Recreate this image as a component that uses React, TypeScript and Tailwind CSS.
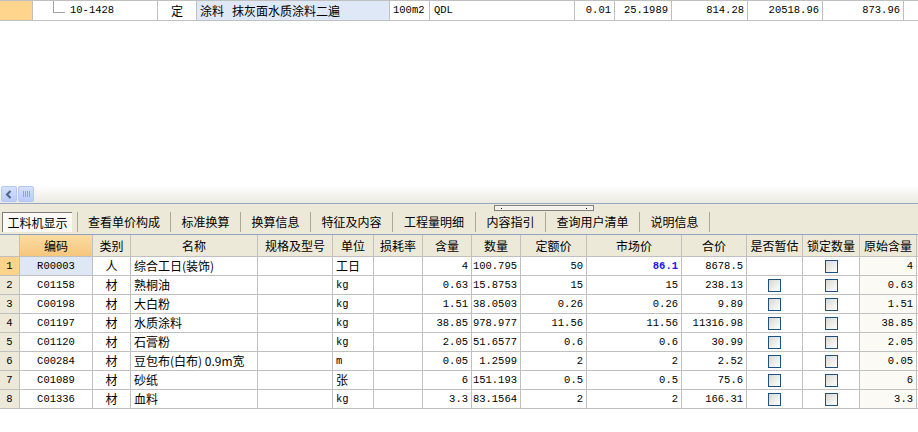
import React from 'react'

const cols = [20, 73, 38, 127, 75, 41, 49, 49, 49, 66, 95, 65, 56, 57, 57]
const headers = ['', '编码', '类别', '名称', '规格及型号', '单位', '损耗率', '含量', '数量', '定额价', '市场价', '合价', '是否暂估', '锁定数量', '原始含量']

type Row = {
  code: string
  kind: string
  name: string
  unit: string
  qty: string
  amount: string
  base: string
  market: string
  total: string
  est: boolean
}

const rows: Row[] = [
  { code: 'R00003', kind: '人', name: '综合工日(装饰)', unit: '工日', qty: '4', amount: '100.795', base: '50', market: '86.1', total: '8678.5', est: false },
  { code: 'C01158', kind: '材', name: '熟桐油', unit: 'kg', qty: '0.63', amount: '15.8753', base: '15', market: '15', total: '238.13', est: true },
  { code: 'C00198', kind: '材', name: '大白粉', unit: 'kg', qty: '1.51', amount: '38.0503', base: '0.26', market: '0.26', total: '9.89', est: true },
  { code: 'C01197', kind: '材', name: '水质涂料', unit: 'kg', qty: '38.85', amount: '978.977', base: '11.56', market: '11.56', total: '11316.98', est: true },
  { code: 'C01120', kind: '材', name: '石膏粉', unit: 'kg', qty: '2.05', amount: '51.6577', base: '0.6', market: '0.6', total: '30.99', est: true },
  { code: 'C00284', kind: '材', name: '豆包布(白布) 0.9m宽', unit: 'm', qty: '0.05', amount: '1.2599', base: '2', market: '2', total: '2.52', est: true },
  { code: 'C01089', kind: '材', name: '砂纸', unit: '张', qty: '6', amount: '151.193', base: '0.5', market: '0.5', total: '75.6', est: true },
  { code: 'C01336', kind: '材', name: '血料', unit: 'kg', qty: '3.3', amount: '83.1564', base: '2', market: '2', total: '166.31', est: true },
]

const tabs = [
  { label: '工料机显示', w: 'w-[70px]' },
  { label: '查看单价构成', w: 'w-[92px]' },
  { label: '标准换算', w: 'w-[69px]' },
  { label: '换算信息', w: 'w-[69px]' },
  { label: '特征及内容', w: 'w-[81px]' },
  { label: '工程量明细', w: 'w-[82px]' },
  { label: '内容指引', w: 'w-[69px]' },
  { label: '查询用户清单', w: 'w-[93px]' },
  { label: '说明信息', w: 'w-[69px]' },
]

const num = 'font-[Liberation_Mono,monospace] text-[10.5px]'
const cjk = '[font-family:Noto_Sans_CJK_SC,sans-serif]'

function Check() {
  return (
    <span className="inline-block w-[13px] h-[13px] border border-[#1c5180] bg-gradient-to-br from-[#d8d8d2] to-white" />
  )
}

function Cell({ w, className = '', children }: { w: number; className?: string; children?: React.ReactNode }) {
  return (
    <div
      className={`h-full shrink-0 border-r border-[#c0c0c0] flex items-center overflow-hidden whitespace-nowrap ${className}`}
      style={{ width: w }}
    >
      {children}
    </div>
  )
}

export default function App() {
  return (
    <div className="w-[918px] h-[432px] bg-white overflow-hidden text-black text-[12px] leading-none [font-family:Liberation_Mono,Noto_Sans_CJK_SC,monospace]">
      {/* ── top row of the upper grid ── */}
      <div className="flex h-[21px] border-y border-[#c0c0c0]">
        <div className="w-[33px] shrink-0 bg-[#ffd48c] border-r border-[#c0c0c0]" />
        <div className="w-[125px] shrink-0 border-r border-[#c0c0c0] relative flex items-center">
          <div className="absolute left-[20px] top-0 h-[11px] border-l border-[#a0a0a0]" />
          <div className="absolute left-[20px] top-[11px] w-[12px] border-t border-[#a0a0a0]" />
          <span className={`${num} ml-[37px]`}>10-1428</span>
        </div>
        <div className={`w-[39px] shrink-0 border-r border-[#c0c0c0] flex items-center justify-center ${cjk}`}>定</div>
        <div className={`w-[193px] shrink-0 border-r border-[#c0c0c0] bg-[#dfe8f6] flex items-center pl-[3px] ${cjk}`}>
          <span>涂料</span>
          <span className="ml-[8px]">抹灰面水质涂料二遍</span>
        </div>
        <div className={`w-[40px] shrink-0 border-r border-[#c0c0c0] flex items-center pl-[3px] ${num}`}>100m2</div>
        <div className={`w-[145px] shrink-0 border-r border-[#c0c0c0] flex items-center pl-[4px] ${num}`}>QDL</div>
        <div className={`w-[40px] shrink-0 border-r border-[#c0c0c0] flex items-center justify-end pr-[3px] ${num}`}>0.01</div>
        <div className={`w-[57px] shrink-0 border-r border-[#c0c0c0] flex items-center justify-end pr-[3px] ${num}`}>25.1989</div>
        <div className={`w-[76px] shrink-0 border-r border-[#c0c0c0] flex items-center justify-end pr-[3px] ${num}`}>814.28</div>
        <div className={`w-[75px] shrink-0 border-r border-[#c0c0c0] flex items-center justify-end pr-[3px] ${num}`}>20518.96</div>
        <div className={`w-[81px] shrink-0 border-r border-[#c0c0c0] flex items-center justify-end pr-[3px] ${num}`}>873.96</div>
        <div className="flex-1" />
      </div>

      <div className="h-[164px]" />

      {/* ── horizontal scrollbar ── */}
      <div className="h-[18px] bg-gradient-to-b from-white to-[#ebeae2] flex items-center pl-[1px] gap-[1px]">
        <div className="w-[16px] h-[16px] rounded-[2px] border border-[#b4c8f6] bg-gradient-to-b from-[#d5e1fd] to-[#b9cbf7] flex items-center justify-center">
          <svg width="8" height="9" viewBox="0 0 8 9">
            <path d="M5.5 1 L2 4.5 L5.5 8" fill="none" stroke="#4d6185" strokeWidth="2" />
          </svg>
        </div>
        <div className="w-[16px] h-[16px] rounded-[2px] border border-[#b4c8f6] bg-gradient-to-b from-[#d5e1fd] to-[#b9cbf7] flex items-center justify-center gap-[1px]">
          <span className="w-[1px] h-[6px] bg-[#8ba3e0]" />
          <span className="w-[1px] h-[6px] bg-[#8ba3e0]" />
          <span className="w-[1px] h-[6px] bg-[#8ba3e0]" />
          <span className="w-[1px] h-[6px] bg-[#8ba3e0]" />
        </div>
      </div>
      <div className="h-[1px] bg-[#98a9c6]" />

      {/* ── tab bar ── */}
      <div className="relative h-[30px] bg-[#ece9d8] flex items-end pb-[2px] pl-[2px]">
        <div className="absolute left-[494px] top-[1px] w-[100px] h-[6px] border border-[#808080] bg-[#f4f3ee]">
          <span className="absolute left-[6px] top-[2px] w-[1px] h-[1px] bg-black" />
          <span className="absolute right-[6px] top-[2px] w-[1px] h-[1px] bg-black" />
        </div>
        {tabs.map((t, i) => (
          <React.Fragment key={t.label}>
            <div
              className={`${t.w} h-[20px] flex items-center justify-center ${cjk} ${
                i === 0 ? 'bg-[#fbfaf6] border-t border-l border-[#7a7a7a] border-r-white border-b-white' : ''
              }`}
            >
              {t.label}
            </div>
            {i === 0 && <div className="w-[5px]" />}
            <div className="w-[1px] h-[20px] bg-[#aca899]" />
          </React.Fragment>
        ))}
      </div>
      <div className="h-[1px] bg-[#8fa3c0]" />

      {/* ── material grid ── */}
      <div className={`flex h-[22px] border-b border-[#c0c0c0] bg-[#ece9d8] ${cjk}`}>
        {headers.map((h, i) => (
          <Cell
            key={i}
            w={cols[i]}
            className={`justify-center ${i === 1 ? 'bg-gradient-to-b from-[#fbdca2] to-[#f6c67c]' : ''}`}
          >
            {h}
          </Cell>
        ))}
      </div>
      {rows.map((r, i) => (
        <div key={r.code} className="flex h-[19px] border-b border-[#c0c0c0]">
          <Cell w={cols[0]} className={`justify-center ${num} ${i === 0 ? 'bg-[#fdd38c]' : 'bg-[#ece9d8]'}`}>
            {i + 1}
          </Cell>
          <Cell w={cols[1]} className={`justify-center ${num} ${i === 0 ? 'bg-[#dee7f5]' : ''}`}>
            {r.code}
          </Cell>
          <Cell w={cols[2]} className={`justify-center ${cjk}`}>{r.kind}</Cell>
          <Cell w={cols[3]} className={`pl-[3px] ${cjk}`}>{r.name}</Cell>
          <Cell w={cols[4]} />
          <Cell w={cols[5]} className={`pl-[3px] ${/^[a-z]+$/.test(r.unit) ? num : cjk}`}>{r.unit}</Cell>
          <Cell w={cols[6]} />
          <Cell w={cols[7]} className={`justify-end pr-[3px] ${num}`}>{r.qty}</Cell>
          <Cell w={cols[8]} className={`justify-end pr-[3px] ${num}`}>{r.amount}</Cell>
          <Cell w={cols[9]} className={`justify-end pr-[3px] ${num}`}>{r.base}</Cell>
          <Cell w={cols[10]} className={`justify-end pr-[3px] ${num} ${i === 0 ? 'text-[#1515f0] font-bold' : ''}`}>
            {r.market}
          </Cell>
          <Cell w={cols[11]} className={`justify-end pr-[3px] ${num}`}>{r.total}</Cell>
          <Cell w={cols[12]} className="justify-center">{r.est && <Check />}</Cell>
          <Cell w={cols[13]} className="justify-center"><Check /></Cell>
          <Cell w={cols[14]} className={`justify-end pr-[3px] bg-[#fcfaf4] ${num}`}>{r.qty}</Cell>
        </div>
      ))}
    </div>
  )
}
